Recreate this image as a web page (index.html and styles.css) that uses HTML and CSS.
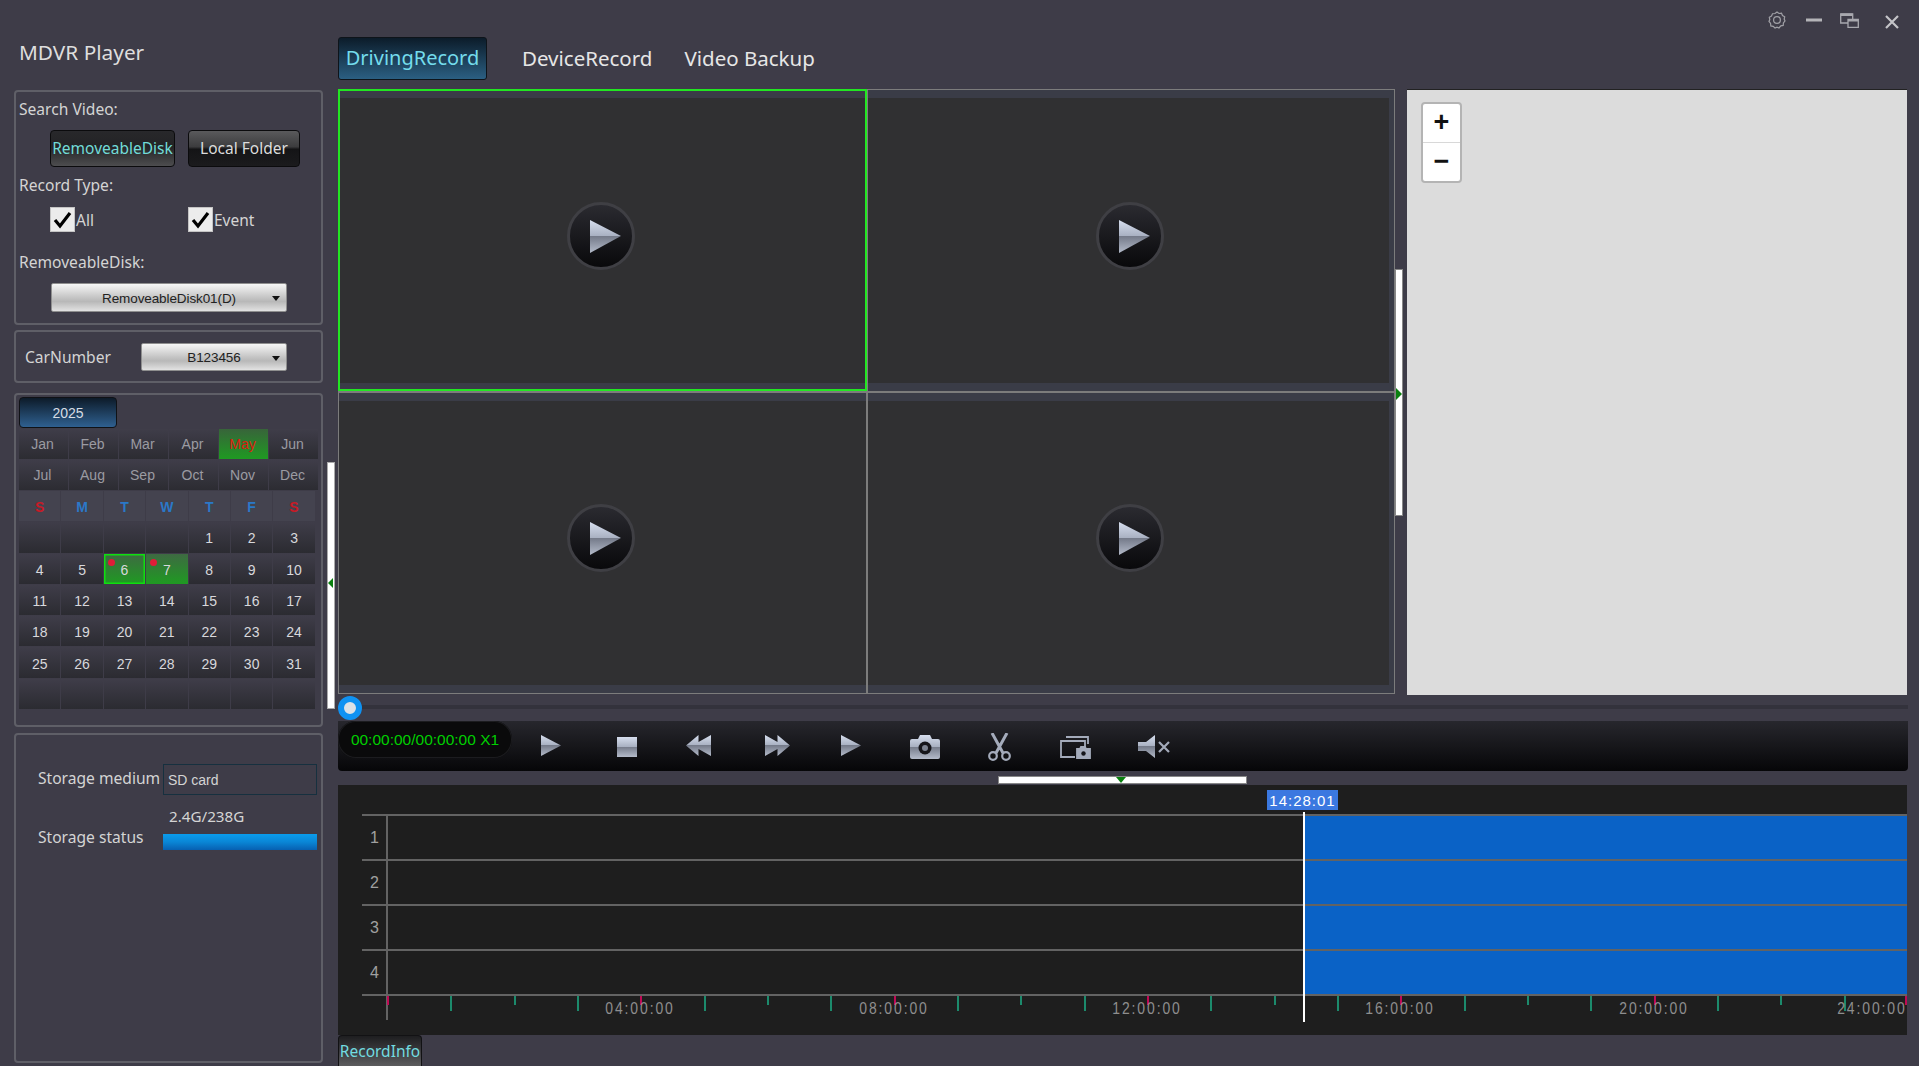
FILE: index.html
```html
<!DOCTYPE html>
<html lang="en">
<head>
<meta charset="utf-8">
<title>MDVR Player</title>
<link rel="stylesheet" href="styles.css">
</head>
<body>
<svg class="defs" width="0" height="0" aria-hidden="true">
  <defs>
    <linearGradient id="metal" x1="0" y1="0" x2="0" y2="1">
      <stop offset="0" stop-color="#d6deee"/>
      <stop offset=".48" stop-color="#a9b1c2"/>
      <stop offset=".5" stop-color="#757b8a"/>
      <stop offset="1" stop-color="#b4bbca"/>
    </linearGradient>
    <linearGradient id="disc" x1="0" y1="0" x2="0" y2="1">
      <stop offset="0" stop-color="#2b2b31"/>
      <stop offset="1" stop-color="#08080a"/>
    </linearGradient>
  </defs>
</svg>
<div class="app">
  <aside class="sidebar">
    <div class="brand">MDVR Player</div>

    <section class="panel search">
      <div class="label">Search Video:</div>
      <div class="btn-row">
        <div class="btn btn-on">RemoveableDisk</div>
        <div class="btn btn-off">Local Folder</div>
      </div>
      <div class="label label-type">Record Type:</div>
      <div class="checks">
        <div class="check check-all">
          <span class="box"><svg viewBox="0 0 25 25" width="25" height="25"><path d="M5 13l5 6L20 6" fill="none" stroke="#000" stroke-width="3.2"/></svg></span>All
        </div>
        <div class="check">
          <span class="box"><svg viewBox="0 0 25 25" width="25" height="25"><path d="M5 13l5 6L20 6" fill="none" stroke="#000" stroke-width="3.2"/></svg></span>Event
        </div>
      </div>
      <div class="label label-disk">RemoveableDisk:</div>
      <div class="select select-disk">RemoveableDisk01(D)</div>
    </section>

    <section class="panel car">
      <div class="label car-label">CarNumber</div>
      <div class="select select-car">B123456</div>
    </section>

    <section class="panel calendar">
      <div class="year">2025</div>
      <div class="months">
        <div>Jan</div><div>Feb</div><div>Mar</div><div>Apr</div><div class="month-on">May</div><div>Jun</div>
        <div>Jul</div><div>Aug</div><div>Sep</div><div>Oct</div><div>Nov</div><div>Dec</div>
      </div>
      <div class="days">
        <div class="wd wd-end">S</div><div class="wd">M</div><div class="wd">T</div><div class="wd">W</div><div class="wd">T</div><div class="wd">F</div><div class="wd wd-end">S</div>
        <div></div><div></div><div></div><div></div><div>1</div><div>2</div><div>3</div>
        <div>4</div><div>5</div><div class="rec-day today">6</div><div class="rec-day">7</div><div>8</div><div>9</div><div>10</div>
        <div>11</div><div>12</div><div>13</div><div>14</div><div>15</div><div>16</div><div>17</div>
        <div>18</div><div>19</div><div>20</div><div>21</div><div>22</div><div>23</div><div>24</div>
        <div>25</div><div>26</div><div>27</div><div>28</div><div>29</div><div>30</div><div>31</div>
        <div></div><div></div><div></div><div></div><div></div><div></div><div></div>
      </div>
    </section>

    <section class="panel storage">
      <div class="st-row">
        <div class="st-label st-medium">Storage medium</div>
        <div class="st-input">SD card</div>
      </div>
      <div class="st-used">2.4G/238G</div>
      <div class="st-row st-status">
        <div class="st-label st-state">Storage status</div>
        <div class="st-bar"><div class="st-fill"></div></div>
      </div>
    </section>
  </aside>

  <div class="side-split"><div class="handle-v handle-left"></div></div>

  <main class="main">
    <header class="topbar">
      <nav class="tabs">
        <div class="tab tab-on">DrivingRecord</div>
        <div class="tab tab-device">DeviceRecord</div>
        <div class="tab tab-backup">Video Backup</div>
      </nav>
      <div class="winbtns">
        <svg class="wi-gear" width="18" height="18" viewBox="0 0 18 18"><path d="M9 1l2 1.500 2.500-.3 1 2.300 2.200 1.200-.5 2.400.8 1.900-1.600 1.900-.2 2.500-2.400.5L11 17l-2-.8-2 .8-1.800-1.600-2.400-.5-.2-2.500L1 10.500l.8-1.900-.5-2.400 2.200-1.200 1-2.300L7 2.500z" fill="none" stroke="#a0a0a6" stroke-width="1.200"/><circle cx="9" cy="9" r="3.400" fill="none" stroke="#a0a0a6" stroke-width="1.200"/></svg>
        <svg class="wi-min" width="16" height="4" viewBox="0 0 16 4"><rect y="0.500" width="16" height="3" fill="#b4b4b8"/></svg>
        <svg class="wi-rest" width="19" height="15" viewBox="0 0 19 15"><path d="M.7 1h12v9H.7z" fill="none" stroke="#a8a8ae" stroke-width="1.300"/><rect x=".7" y=".5" width="12" height="2.500" fill="#a8a8ae"/><path d="M8 6.500h10.300v8H8z" fill="#3e3c48" stroke="#a8a8ae" stroke-width="1.300"/><rect x="8" y="6.500" width="10.300" height="2" fill="#a8a8ae"/></svg>
        <svg class="wi-close" width="14" height="14" viewBox="0 0 14 14"><path d="M1 1l12 12M13 1L1 13" stroke="#c4c4c8" stroke-width="2.200"/></svg>
      </div>
    </header>

    <div class="stage">
      <div class="video-frame">
        <div class="video-grid">
          <div class="pane pane-active">
            <svg class="bigplay" width="68" height="68" viewBox="0 0 68 68"><circle cx="34" cy="34" r="32.500" fill="url(#disc)" stroke="#3f3f44" stroke-width="3"/><polygon points="23,18 54,34 23,51" fill="url(#metal)"/></svg>
          </div>
          <div class="pane">
            <svg class="bigplay" width="68" height="68" viewBox="0 0 68 68"><circle cx="34" cy="34" r="32.500" fill="url(#disc)" stroke="#3f3f44" stroke-width="3"/><polygon points="23,18 54,34 23,51" fill="url(#metal)"/></svg>
          </div>
          <div class="pane">
            <svg class="bigplay" width="68" height="68" viewBox="0 0 68 68"><circle cx="34" cy="34" r="32.500" fill="url(#disc)" stroke="#3f3f44" stroke-width="3"/><polygon points="23,18 54,34 23,51" fill="url(#metal)"/></svg>
          </div>
          <div class="pane">
            <svg class="bigplay" width="68" height="68" viewBox="0 0 68 68"><circle cx="34" cy="34" r="32.500" fill="url(#disc)" stroke="#3f3f44" stroke-width="3"/><polygon points="23,18 54,34 23,51" fill="url(#metal)"/></svg>
          </div>
        </div>
      </div>
      <div class="map-split"><div class="handle-v handle-right"></div></div>
      <div class="map">
        <div class="zoom-ctl">
          <div class="zoom-btn zoom-plus">+</div>
          <div class="zoom-btn">&#8722;</div>
        </div>
      </div>
    </div>

    <div class="scrub"><div class="thumb"></div></div>

    <div class="toolbar">
      <div class="clock">00:00:00/00:00:00 X1</div>
      <svg class="ti ti-play" width="20" height="21" viewBox="0 0 20 21"><polygon points="0,0 20,10.500 0,21" fill="url(#metal)"/></svg>
      <svg class="ti ti-stop" width="20" height="20" viewBox="0 0 20 20"><rect width="20" height="20" fill="url(#metal)"/></svg>
      <svg class="ti ti-rew" width="25" height="21" viewBox="0 0 25 21"><polygon points="12.500,0 12.500,7 25,0 25,21 12.500,14 12.500,21 0,10.500" fill="url(#metal)"/></svg>
      <svg class="ti ti-ff" width="25" height="21" viewBox="0 0 25 21"><polygon points="0,0 12.500,7 12.500,0 25,10.500 12.500,21 12.500,14 0,21" fill="url(#metal)"/></svg>
      <svg class="ti ti-next" width="20" height="21" viewBox="0 0 20 21"><polygon points="0,0 20,10.500 0,21" fill="url(#metal)"/></svg>
      <svg class="ti ti-cam" width="30" height="24" viewBox="0 0 30 24"><path d="M2 4h6l2-4h10l2 4h6a2 2 0 0 1 2 2v16a2 2 0 0 1-2 2H2a2 2 0 0 1-2-2V6a2 2 0 0 1 2-2z" fill="url(#metal)"/><circle cx="15" cy="13" r="6.500" fill="#15151a"/><circle cx="15" cy="13" r="3" fill="#7c8290"/></svg>
      <svg class="ti ti-cut" width="25" height="28" viewBox="0 0 25 28" fill="none" stroke="#a4abbb"><path d="M5 0l11 20M20 0L9 20" stroke-width="3"/><circle cx="6" cy="23" r="3.800" stroke-width="2.200"/><circle cx="19" cy="23" r="3.800" stroke-width="2.200"/></svg>
      <svg class="ti ti-shot" width="31" height="23" viewBox="0 0 31 23" fill="none" stroke="#a4abbb" stroke-width="1.800"><path d="M6 1h22v7"/><path d="M15 21H1V5h24v7"/><path d="M17 13h3l1-2h4l1 2h4v9H17z" fill="#a4abbb"/><circle cx="23.500" cy="17.500" r="2.200" fill="#15151a" stroke="none"/></svg>
      <svg class="ti ti-mute" width="32" height="23" viewBox="0 0 32 23"><polygon points="0,7 8,7 17,0 17,23 8,16 0,16" fill="url(#metal)"/><path d="M21 7l10 10M31 7L21 17" stroke="#a4abbb" stroke-width="2.200"/></svg>
    </div>

    <div class="split-h"><div class="handle-h"></div></div>

    <div class="timeline">
      <div class="tl-head"></div>
      <div class="track"><div class="tl-num">1</div><div class="tl-gap"></div><div class="tl-rec"></div></div>
      <div class="track"><div class="tl-num">2</div><div class="tl-gap"></div><div class="tl-rec"></div></div>
      <div class="track"><div class="tl-num">3</div><div class="tl-gap"></div><div class="tl-rec"></div></div>
      <div class="track"><div class="tl-num">4</div><div class="tl-gap"></div><div class="tl-rec"></div></div>
      <div class="ruler">
        <i class="tick red" style="left:49px"></i><i class="tick long" style="left:112.3px"></i><i class="tick" style="left:175.7px"></i><i class="tick long" style="left:239px"></i>
        <i class="tick red" style="left:302.3px"></i><i class="tick long" style="left:365.7px"></i><i class="tick" style="left:429px"></i><i class="tick long" style="left:492.3px"></i>
        <i class="tick red" style="left:555.7px"></i><i class="tick long" style="left:619px"></i><i class="tick" style="left:682.3px"></i><i class="tick long" style="left:745.7px"></i>
        <i class="tick red" style="left:809px"></i><i class="tick long" style="left:872.3px"></i><i class="tick" style="left:935.7px"></i><i class="tick long" style="left:999px"></i>
        <i class="tick red" style="left:1062.3px"></i><i class="tick long" style="left:1125.7px"></i><i class="tick" style="left:1189px"></i><i class="tick long" style="left:1252.3px"></i>
        <i class="tick red" style="left:1315.7px"></i><i class="tick long" style="left:1379px"></i><i class="tick" style="left:1442.3px"></i><i class="tick long" style="left:1505.7px"></i>
        <i class="tick red" style="left:1567px"></i>
        <span class="hour" style="left:302.3px">04:00:00</span>
        <span class="hour" style="left:555.7px">08:00:00</span>
        <span class="hour" style="left:809px">12:00:00</span>
        <span class="hour" style="left:1062.3px">16:00:00</span>
        <span class="hour" style="left:1315.7px">20:00:00</span>
        <span class="hour hour-end">24:00:00</span>
      </div>
      <div class="cursor"><span class="cursor-time">14:28:01</span></div>
    </div>

    <div class="bottom-tabs"><div class="rec-tab">RecordInfo</div></div>
  </main>
</div>
</body>
</html>
```

FILE: styles.css
```css
* { box-sizing: border-box; }
html, body { margin: 0; height: 100%; }
body {
  width: 1919px;
  height: 1066px;
  overflow: hidden;
  background: #3e3c48;
  color: #d8d8d8;
  font-family: "Noto Sans", "Liberation Sans", sans-serif;
}
.defs { position: absolute; }
.app { display: flex; height: 1066px; padding-left: 14px; }

/* Sidebar */
.sidebar { width: 309px; display: flex; flex-direction: column; }
.brand { height: 90px; padding: 38px 0 0 5px; font-size: 20.8px; line-height: 28px; color: #dedede; }
.panel { border: 2px solid #5f5f67; border-radius: 4px; }
.label { font-size: 15.6px; line-height: 20px; color: #d4d4d4; white-space: nowrap; }

.search { height: 235px; padding: 7px 0 0 3px; }
.btn-row { display: flex; gap: 13px; margin: 11px 0 0 31px; }
.btn {
  height: 37px; border: 1px solid #0b0b0d; border-radius: 4px; padding-bottom: 2px;
  display: flex; align-items: center; justify-content: center;
  font-size: 15.5px; white-space: nowrap;
}
.btn-on { width: 125px; color: #72dcd8; background: linear-gradient(#28282b, #232325 45%, #4d4d4f 100%); }
.btn-off { width: 112px; color: #dcdcdc; background: linear-gradient(#5a5a5c, #3c3c3e 45%, #141416 52%, #1b1b1d); }
.label-type { margin-top: 8px; }
.checks { display: flex; margin: 12px 0 0 31px; height: 25px; }
.check { display: flex; align-items: center; font-size: 15.5px; color: #d4d4d4; }
.check-all { width: 138px; }
.box { width: 25px; height: 25px; background: #ececec; border: 1px solid #c4c4c4; margin-right: 1px; display: block; }
.box svg { display: block; margin: -1px; }
.label-disk { margin-top: 20px; }
.select {
  position: relative; height: 29px; border: 1px solid #8e8e8e; border-radius: 2px; padding-top: 1px;
  background: linear-gradient(#f6f6f6, #c0c0c0 55%, #b8b8b8 65%, #e2e2e2);
  color: #222; display: flex; align-items: center; justify-content: center;
  font: 13.5px "Liberation Sans", sans-serif; letter-spacing: -.1px;
}
.select::after {
  content: ""; position: absolute; right: 6px; top: 12px;
  border: 4px solid transparent; border-top: 5px solid #111; border-bottom: 0;
}
.select-disk { width: 236px; margin: 11px 0 0 32px; }
.car { height: 53px; margin-top: 5px; display: flex; align-items: center; padding-left: 9px; }
.car-label { width: 116px; }
.select-car { width: 146px; height: 28px; }

.calendar { height: 334px; margin-top: 10px; padding: 2px 0 0 3px; font-family: "Liberation Sans", sans-serif; }
.year {
  width: 98px; height: 31px; border: 1px solid #101216; border-radius: 4px;
  background: linear-gradient(#0d1b29, #2f6090);
  display: flex; align-items: center; justify-content: center; font-size: 14px; color: #d6dde4;
}
.months { display: grid; grid-template-columns: repeat(6, 49px); grid-auto-rows: 30px; gap: 1px; width: 299px; margin-top: 1px; }
.months div {
  background: linear-gradient(#3f3d49, #2c2c32); padding-right: 2px;
  display: flex; align-items: center; justify-content: center; font-size: 14px; color: #9b9ba2;
}
.months .month-on { background: linear-gradient(#38643a, #1f9a22); color: #dc1c10; }
.days { display: grid; grid-template-columns: repeat(7, 41.4px); grid-auto-rows: 30.3px; gap: 1px; margin-top: 1px; }
.days div {
  position: relative; background: linear-gradient(#3f3d49, #2b2b31); padding-top: 2px;
  display: flex; align-items: center; justify-content: center; font-size: 14px; color: #d8d8dc;
}
.days .wd { background: #44434f; color: #2a78c8; font-weight: bold; }
.days .wd-end { color: #c81a26; }
.days .rec-day { background: linear-gradient(#3e6a42, #1f9a22); }
.days .rec-day::before {
  content: ""; position: absolute; left: 4px; top: 5px; width: 7px; height: 7px;
  border-radius: 50%; background: #e01c38;
}
.days .today { box-shadow: inset 0 0 0 1.5px #0fe00f; }

.storage { height: 330px; margin-top: 6px; padding: 29px 4px 0 22px; }
.st-row { display: flex; align-items: center; }
.st-label { width: 125px; flex: none; font-size: 15.6px; line-height: 20px; color: #d4d4d4; white-space: nowrap; }
.st-medium { margin-top: -4px; }
.st-state { margin-top: -11px; }
.st-input {
  width: 157px; height: 31px; border: 1px solid #16303f; padding-left: 4px;
  display: flex; align-items: center;
  font: 14px "Liberation Sans", sans-serif; color: #d4d4d4;
}
.st-used { margin: 11px 0 0 131px; font-size: 15.2px; line-height: 20px; color: #d4d4d4; }
.st-status { margin-top: 1px; height: 30px; }
.st-bar { width: 157px; height: 16px; background: #6a6a70; margin-top: -1px; }
.st-fill { width: 154px; height: 16px; background: linear-gradient(#0a9cec, #0a86d6 50%, #0760b2); }

.side-split { width: 15px; flex: none; display: flex; justify-content: center; padding: 462px 0 0 1px; }
.handle-v { position: relative; width: 8px; height: 247px; background: #fff; border: 1px solid #888; }
.handle-left { border-color: #aaa; }
.handle-left::after {
  content: ""; position: absolute; left: 0; top: 115px;
  border: 5px solid transparent; border-right: 5px solid #0a800f; border-left: 0;
}
.handle-right::after {
  content: ""; position: absolute; left: 0; top: 118px;
  border: 6px solid transparent; border-left: 6px solid #0a800f; border-right: 0;
}

/* Main */
.main { width: 1570px; display: flex; flex-direction: column; }
.topbar { height: 89px; display: flex; justify-content: space-between; }
.tabs { display: flex; padding-top: 37px; height: 80px; }
.tab { height: 43px; padding-bottom: 2px; font-size: 20.5px; display: flex; align-items: center; color: #e6e6e6; white-space: nowrap; }
.tab-on {
  width: 149px; justify-content: center; color: #74dcec; border: 1px solid #0e141a; border-radius: 3px;
  font-size: 20px; background: linear-gradient(#0c1c2a, #2b5f82);
}
.tab-device { margin-left: 35px; }
.tab-backup { margin-left: 32px; }
.winbtns { display: flex; align-items: flex-start; padding: 12px 9px 0 0; }
.wi-gear { margin-top: -1px; }
.wi-min { margin: 6px 0 0 20px; }
.wi-rest { margin: 1px 0 0 18px; }
.wi-close { margin: 3px 0 0 26px; }

.stage { height: 606px; display: flex; }
.video-frame { width: 1057px; height: 605px; border: 1px solid #7c7c7c; background: #7c7c7c; }
.video-grid { display: grid; grid-template-columns: 527px 526px; grid-template-rows: 301px 300px; gap: 2px; }
.pane {
  position: relative; background: #303032;
  border-top: 8px solid #3a3c47; border-bottom: 8px solid #3a3c47;
  display: flex; align-items: center; justify-content: center; padding: 0 3px 10px 0;
}
.pane:nth-child(even) { box-shadow: inset -5px 0 #3a3c47; }
.pane-active::after {
  content: ""; position: absolute; left: -1px; right: -1px; top: -9px; bottom: -8px;
  border: 2px solid #22e622;
}
.map-split { width: 12px; flex: none; display: flex; padding-top: 180px; }
.handle-right { width: 8px; }
.map { flex: none; width: 500px; height: 606px; background: #dcdcdc; padding: 12px 0 0 14px; border-top: 1px solid #222; }
.zoom-ctl { width: 41px; height: 81px; border: 2px solid #b4b4b4; border-radius: 4px; background: #fff; }
.zoom-btn {
  height: 38.500px; color: #111; display: flex; align-items: center; justify-content: center;
  font: bold 27px "Liberation Sans", sans-serif;
}
.zoom-plus { border-bottom: 1px solid #d8d8d8; }

.scrub {
  height: 26px; display: flex; align-items: center;
  background: linear-gradient(#33323c, #33323c) 0 10px / 100% 4px no-repeat;
}
.thumb { width: 24px; height: 24px; border-radius: 50%; background: #dde2e6; border: 6px solid #0f92f2; }

.toolbar {
  position: relative; height: 50px; border-radius: 0 0 4px 4px;
  background: linear-gradient(#27272d, #060608);
}
.clock {
  width: 174px; height: 37px; border-radius: 18px; background: #0a0a0b; color: #00cf00;
  box-shadow: inset 0 0 0 1px #1c1c1f;
  display: flex; align-items: center; justify-content: center;
  font: 15.500px "Liberation Sans", sans-serif; white-space: nowrap;
}
.ti { position: absolute; top: 15px; }
.ti-play { left: 203px; top: 14px; }
.ti-stop { left: 279px; top: 16px; }
.ti-rew { left: 348px; top: 14px; }
.ti-ff { left: 427px; top: 14px; }
.ti-next { left: 503px; top: 14px; }
.ti-cam { left: 572px; top: 14px; }
.ti-cut { left: 649px; top: 12px; }
.ti-shot { left: 722px; top: 15px; }
.ti-mute { left: 800px; top: 14px; }

.split-h { height: 14px; padding: 5px 0 0 660px; }
.handle-h { position: relative; width: 249px; height: 8px; background: #fff; border: 1px solid #888; }
.handle-h::after {
  content: ""; position: absolute; left: 117px; top: 0;
  border: 5px solid transparent; border-top: 6px solid #0a800f; border-bottom: 0;
}

.timeline { position: relative; width: 1569px; height: 250px; background: #1e1e1e; }
.tl-head { height: 29px; }
.track { height: 45px; display: flex; margin-left: 24px; border-top: 2px solid #636363; }
.tl-num {
  width: 26px; flex: none; border-right: 2px solid #636363; text-align: center; padding-left: 1px;
  font: 16px/43px "Liberation Sans", sans-serif; color: #a0a0a0;
}
.tl-gap { width: 917px; flex: none; }
.tl-rec { flex: 1; background: #0a62c6; }
.ruler {
  position: relative; height: 41px;
  background: linear-gradient(#636363, #636363) 48px 0 / 2px 26px no-repeat;
  font-family: "Liberation Sans", sans-serif;
}
.ruler::before { content: ""; position: absolute; left: 24px; right: 0; top: 0; height: 2px; background: #636363; }
.tick { position: absolute; top: 2px; width: 2px; height: 9px; background: #1c8a6c; }
.tick.long { height: 15px; }
.tick.red { background: #c00a55; }
.hour {
  position: absolute; top: 6px; transform: translateX(-50%) scaleX(.82);
  font-size: 17px; line-height: 18px; letter-spacing: 2.300px; color: #8e8e8e; white-space: nowrap;
}
.hour-end { right: 0; transform: scaleX(.82); transform-origin: right center; }
.cursor { position: absolute; left: 965px; top: 27px; width: 2px; height: 210px; background: #fff; }
.cursor-time {
  position: absolute; left: -36px; top: -22px; width: 71px; height: 20px; background: #3b78e0; color: #fff;
  display: flex; align-items: center; justify-content: center;
  font: 15px "Liberation Sans", sans-serif; letter-spacing: 1px; white-space: nowrap;
}
.bottom-tabs { height: 31px; }
.rec-tab {
  width: 84px; height: 31px; border: 1px solid #121214; border-bottom: 0; border-radius: 4px 4px 0 0;
  background: linear-gradient(#1e1e20, #3b3b3e 50%, #5c5c5e);
  display: flex; align-items: center; justify-content: center;
  font-size: 15.500px; color: #72dce0; white-space: nowrap;
}
```
